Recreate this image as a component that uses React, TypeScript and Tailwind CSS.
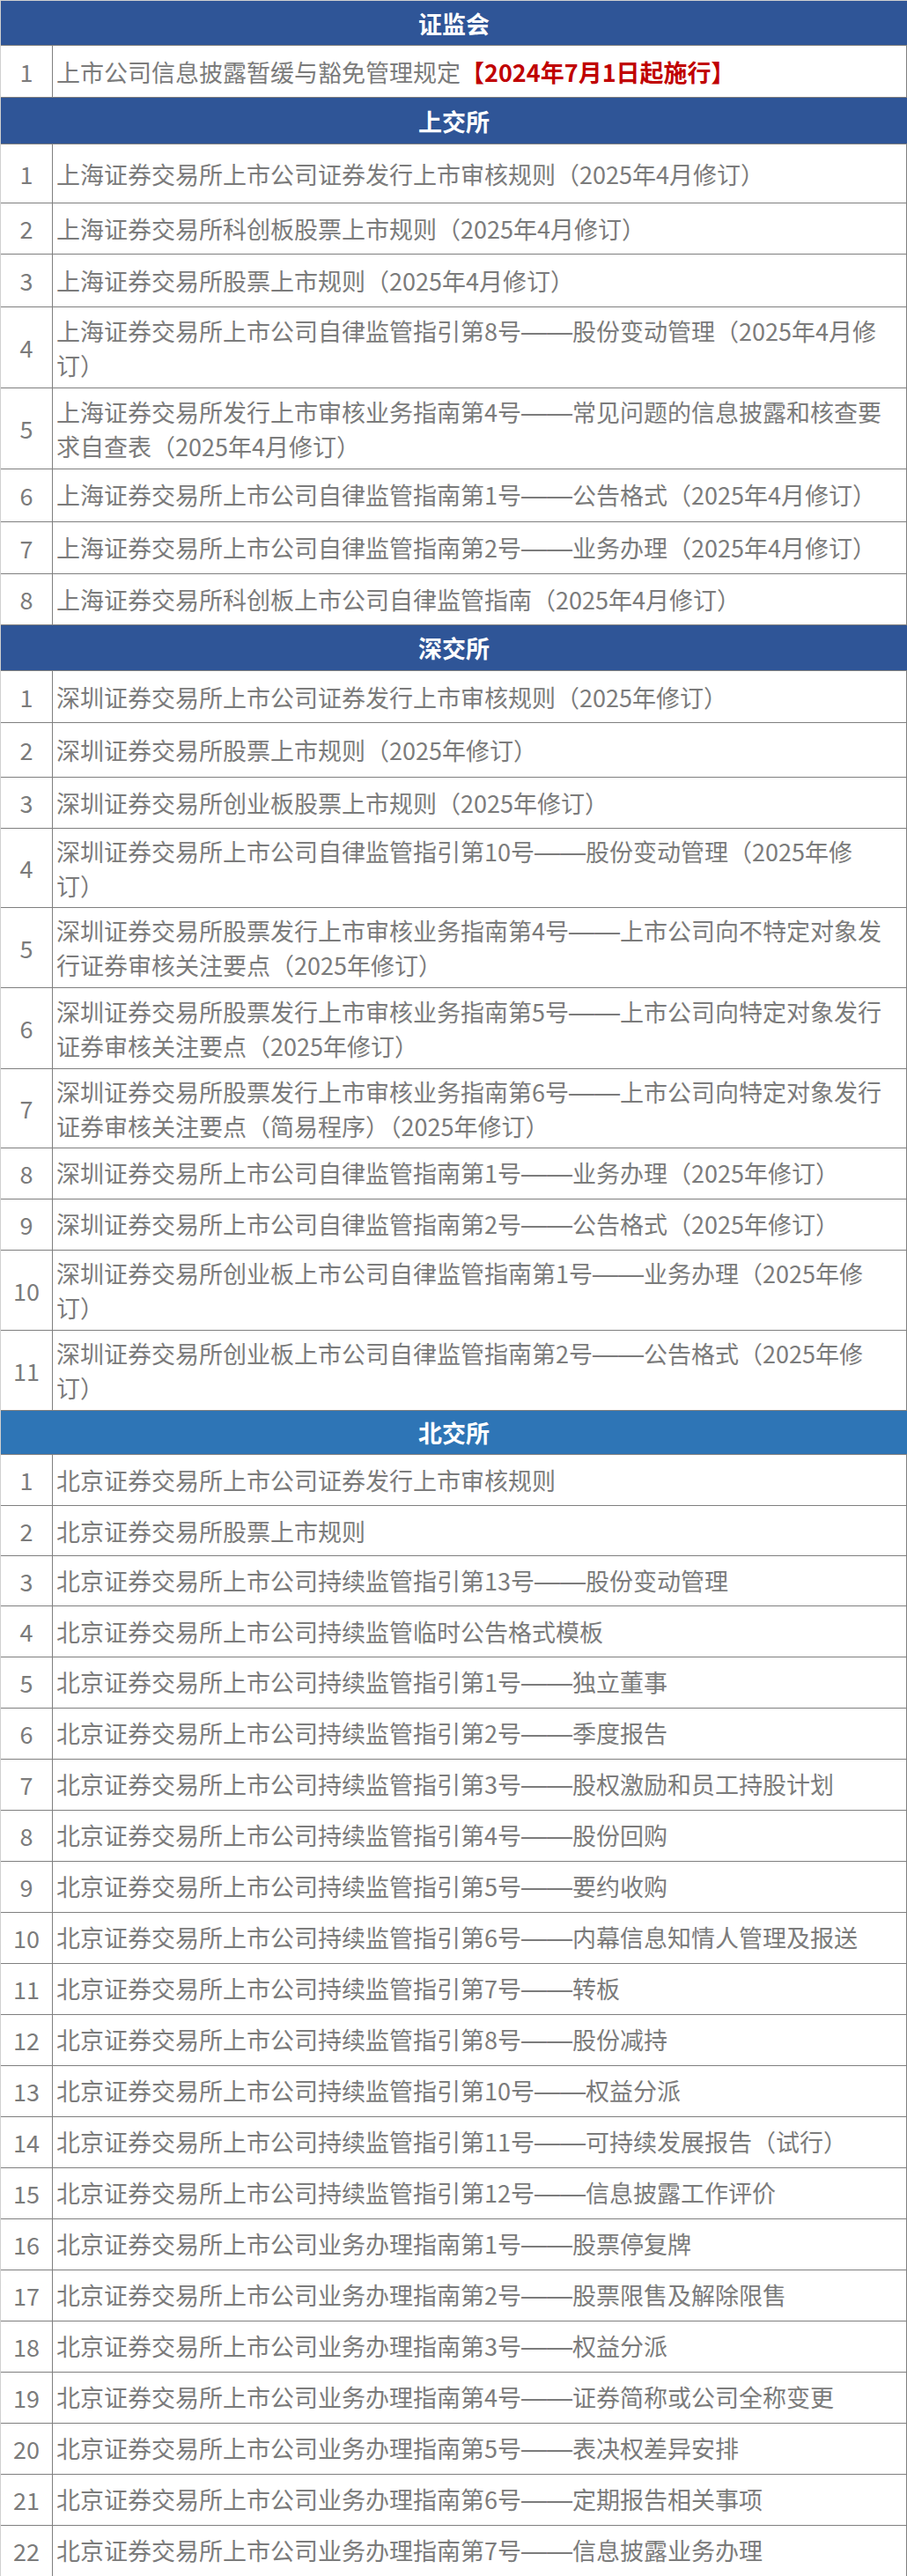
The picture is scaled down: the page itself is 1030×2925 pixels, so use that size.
import React from "react";

type Row = { h: string; lines: React.ReactNode[] };
type Section = { title: string; bg: string; h: string; rows: Row[] };

// the reference draws the double dash as one long joined rule
function dashes(text: string): React.ReactNode {
  const parts = text.split("——");
  return parts.map((p, i) => (
    <React.Fragment key={i}>
      {i > 0 && <span className="font-['Liberation_Sans'] text-[29px]">——</span>}
      {p}
    </React.Fragment>
  ));
}

const one = (h: string, text: React.ReactNode): Row => ({
  h,
  lines: [typeof text === "string" ? dashes(text) : text],
});
const two = (h: string, a: string, b: string): Row => ({ h, lines: [dashes(a), dashes(b)] });

const sections: Section[] = [
  {
    title: "证监会",
    bg: "bg-[#2f5597]",
    h: "h-[51px]",
    rows: [
      one(
        "h-[59px]",
        <>
          上市公司信息披露暂缓与豁免管理规定
          <span className="font-bold text-[#c00000]">【2024年7月1日起施行】</span>
        </>
      ),
    ],
  },
  {
    title: "上交所",
    bg: "bg-[#2f5597]",
    h: "h-[53px]",
    rows: [
      one("h-[67px]", "上海证券交易所上市公司证券发行上市审核规则（2025年4月修订）"),
      one("h-[58px]", "上海证券交易所科创板股票上市规则（2025年4月修订）"),
      one("h-[60px]", "上海证券交易所股票上市规则（2025年4月修订）"),
      two("h-[92px]", "上海证券交易所上市公司自律监管指引第8号——股份变动管理（2025年4月修", "订）"),
      two("h-[92px]", "上海证券交易所发行上市审核业务指南第4号——常见问题的信息披露和核查要", "求自查表（2025年4月修订）"),
      one("h-[60px]", "上海证券交易所上市公司自律监管指南第1号——公告格式（2025年4月修订）"),
      one("h-[59px]", "上海证券交易所上市公司自律监管指南第2号——业务办理（2025年4月修订）"),
      one("h-[58px]", "上海证券交易所科创板上市公司自律监管指南（2025年4月修订）"),
    ],
  },
  {
    title: "深交所",
    bg: "bg-[#2f5597]",
    h: "h-[52px]",
    rows: [
      one("h-[59px]", "深圳证券交易所上市公司证券发行上市审核规则（2025年修订）"),
      one("h-[62px]", "深圳证券交易所股票上市规则（2025年修订）"),
      one("h-[58px]", "深圳证券交易所创业板股票上市规则（2025年修订）"),
      two("h-[90px]", "深圳证券交易所上市公司自律监管指引第10号——股份变动管理（2025年修", "订）"),
      two("h-[91px]", "深圳证券交易所股票发行上市审核业务指南第4号——上市公司向不特定对象发", "行证券审核关注要点（2025年修订）"),
      two("h-[92px]", "深圳证券交易所股票发行上市审核业务指南第5号——上市公司向特定对象发行", "证券审核关注要点（2025年修订）"),
      two("h-[90px]", "深圳证券交易所股票发行上市审核业务指南第6号——上市公司向特定对象发行", "证券审核关注要点（简易程序）（2025年修订）"),
      one("h-[58px]", "深圳证券交易所上市公司自律监管指南第1号——业务办理（2025年修订）"),
      one("h-[58px]", "深圳证券交易所上市公司自律监管指南第2号——公告格式（2025年修订）"),
      two("h-[91px]", "深圳证券交易所创业板上市公司自律监管指南第1号——业务办理（2025年修", "订）"),
      two("h-[91px]", "深圳证券交易所创业板上市公司自律监管指南第2号——公告格式（2025年修", "订）"),
    ],
  },
  {
    title: "北交所",
    bg: "bg-[#2e75b6]",
    h: "h-[50px]",
    rows: [
      "北京证券交易所上市公司证券发行上市审核规则",
      "北京证券交易所股票上市规则",
      "北京证券交易所上市公司持续监管指引第13号——股份变动管理",
      "北京证券交易所上市公司持续监管临时公告格式模板",
      "北京证券交易所上市公司持续监管指引第1号——独立董事",
      "北京证券交易所上市公司持续监管指引第2号——季度报告",
      "北京证券交易所上市公司持续监管指引第3号——股权激励和员工持股计划",
      "北京证券交易所上市公司持续监管指引第4号——股份回购",
      "北京证券交易所上市公司持续监管指引第5号——要约收购",
      "北京证券交易所上市公司持续监管指引第6号——内幕信息知情人管理及报送",
      "北京证券交易所上市公司持续监管指引第7号——转板",
      "北京证券交易所上市公司持续监管指引第8号——股份减持",
      "北京证券交易所上市公司持续监管指引第10号——权益分派",
      "北京证券交易所上市公司持续监管指引第11号——可持续发展报告（试行）",
      "北京证券交易所上市公司持续监管指引第12号——信息披露工作评价",
      "北京证券交易所上市公司业务办理指南第1号——股票停复牌",
      "北京证券交易所上市公司业务办理指南第2号——股票限售及解除限售",
      "北京证券交易所上市公司业务办理指南第3号——权益分派",
      "北京证券交易所上市公司业务办理指南第4号——证券简称或公司全称变更",
      "北京证券交易所上市公司业务办理指南第5号——表决权差异安排",
      "北京证券交易所上市公司业务办理指南第6号——定期报告相关事项",
      "北京证券交易所上市公司业务办理指南第7号——信息披露业务办理",
    ].map((t, i) => one(i === 1 || i === 2 ? "h-[57px]" : "h-[58px]", t)),
  },
];

export default function App() {
  return (
    <div
      className="w-[1030px] bg-white border-l border-t border-[#d0d0d0] text-[27px] leading-[37px] text-[#7b7b7b]"
      style={{ fontFamily: '"Noto Sans CJK SC", "Microsoft YaHei", sans-serif' }}
    >
      {sections.map((s) => (
        <div key={s.title}>
          <div
            className={`${s.h} ${s.bg} flex items-center justify-center border-b border-[#7f7f7f] font-bold text-white`}
          >
            {s.title}
          </div>
          {s.rows.map((r, i) => (
            <div key={i} className={`${r.h} flex border-b border-r border-[#7f7f7f]`}>
              <div className="w-[59px] shrink-0 flex items-center justify-center border-r border-[#7f7f7f]">
                {i + 1}
              </div>
              <div className="flex-1 flex flex-col justify-center pl-[4px]">
                {r.lines.map((l, j) => (
                  <div key={j} className="whitespace-nowrap">
                    {l}
                  </div>
                ))}
              </div>
            </div>
          ))}
        </div>
      ))}
    </div>
  );
}
